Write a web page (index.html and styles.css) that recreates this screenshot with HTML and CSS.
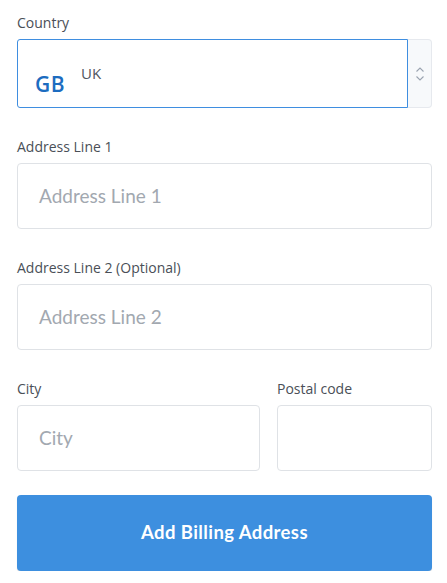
FILE: index.html
```html
<!DOCTYPE html>
<html>
<head>
<meta charset="utf-8">
<link rel="stylesheet" href="styles.css">
</head>
<body>
<form class="form">
  <div class="field">
    <label class="label">Country</label>
    <div class="select">
      <div class="select-main">
        <span class="code">GB</span>
        <span class="country">UK</span>
      </div>
      <div class="stepper">
        <svg width="10" height="16" viewBox="0 0 10 16"><path d="M1.5 5.5 L5 2 L8.5 5.5 M1.5 10.5 L5 14 L8.5 10.5" fill="none" stroke="#9aa3b0" stroke-width="1.1"/></svg>
      </div>
    </div>
  </div>
  <div class="field">
    <label class="label">Address Line 1</label>
    <div class="input"><span class="ph">Address Line 1</span></div>
  </div>
  <div class="field">
    <label class="label">Address Line 2 (Optional)</label>
    <div class="input"><span class="ph">Address Line 2</span></div>
  </div>
  <div class="row">
    <div class="field city">
      <label class="label">City</label>
      <div class="input"><span class="ph">City</span></div>
    </div>
    <div class="field postal">
      <label class="label">Postal code</label>
      <div class="input"></div>
    </div>
  </div>
  <button type="button" class="btn">Add Billing Address</button>
</form>
</body>
</html>
```

FILE: styles.css
```css
* { box-sizing: border-box; }
html, body { margin: 0; background: #fff; }
body { font-family: Lato, "Open Sans", sans-serif; }
.form {
  width: 447px;
  padding: 15px 15px 0 17px;
  display: flex;
  flex-direction: column;
}
.field { display: flex; flex-direction: column; margin-bottom: 31px; }
.label {
  font-family: "Open Sans", Lato, sans-serif;
  font-size: 14px;
  line-height: 16px;
  color: #4a4f57;
  margin-bottom: 8px;
}
.select {
  display: flex;
  height: 69px;
}
.select-main {
  flex: 1;
  border: 1px solid #3f8ee0;
  border-radius: 3px 0 0 3px;
  display: flex;
  align-items: flex-start;
  padding: 24px 0 0 17px;
}
.code {
  font-family: "Open Sans", sans-serif;
  font-weight: 600;
  font-size: 21px;
  line-height: 28px;
  color: #1c6cc0;
  margin-top: 6px;
  letter-spacing: 0.5px;
}
.country {
  font-family: "Open Sans", sans-serif;
  font-size: 15px;
  line-height: 18px;
  color: #505660;
  margin-left: 16px;
}
.stepper {
  width: 24px;
  background: #f7f9fb;
  border: 1px solid #e6e9ee;
  border-left: none;
  border-radius: 0 4px 4px 0;
  display: flex;
  align-items: center;
  justify-content: center;
}
.input {
  height: 66px;
  border: 1px solid #dfe2e6;
  border-radius: 4px;
  display: flex;
  align-items: center;
  padding-left: 21px;
}
.ph {
  font-size: 19px;
  color: #a2a8b0;
  padding-bottom: 2px;
}
.row { display: flex; gap: 17px; }
.row .field { margin-bottom: 24px; }
.city { flex: 0 0 243px; }
.postal { flex: 1; }
.btn {
  height: 76px;
  border: none;
  border-radius: 4px;
  background: #3d8fdf;
  color: #fff;
  font-family: Lato, sans-serif;
  font-weight: 700;
  font-size: 18.5px;
  letter-spacing: 0.4px;
  padding: 0 0 2px;
  box-shadow: 0 1px 1px rgba(0,0,0,0.15);
}
```
